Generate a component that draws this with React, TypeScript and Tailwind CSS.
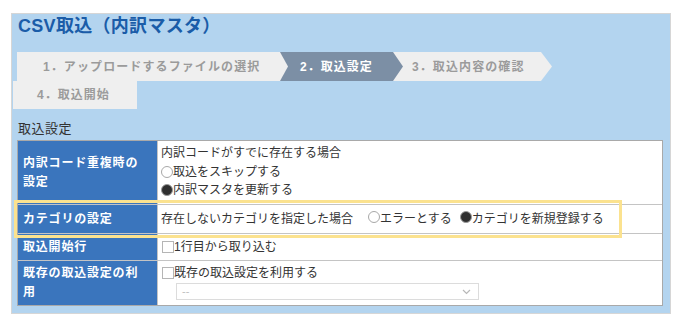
import React from "react";

function Radio({ checked }: { checked?: boolean }) {
  return checked ? (
    <span className="inline-block w-[12px] h-[12px] rounded-full bg-[#2f2f2f] border border-[#9a9a9a] shrink-0" />
  ) : (
    <span className="inline-block w-[12px] h-[12px] rounded-full bg-white border border-[#a8a8a8] shrink-0" />
  );
}

function Check() {
  return <span className="inline-block w-[12px] h-[12px] bg-white border border-[#b5b5b5] shrink-0" />;
}

export default function App() {
  return (
    <div className="w-[677px] h-[321px] bg-white font-['Liberation_Sans','Noto_Sans_CJK_JP',sans-serif] text-[#333]">
      <div className="pt-[13px] pl-[11px]">
        <div className="w-[660px] h-[301px] bg-[#b3d4ef] border border-[#d6d6d6]">
          {/* title */}
          <div className="pl-[6px] h-[24px] leading-[24px] text-[18px] font-bold text-[#1a5ca8] tracking-[0.3px]">
            CSV取込（内訳マスタ）
          </div>

          {/* steps */}
          <div className="mt-[14px] ml-[5px] flex h-[29px]">
            <div className="relative z-30 w-[271px] h-full bg-[#efefef] [clip-path:polygon(0_0,263px_0,271px_50%,263px_100%,0_100%)] flex items-center pl-[26px] text-[12px] font-bold text-[#9b9b9b] tracking-[1.1px]">
              1．アップロードするファイルの選択
            </div>
            <div className="relative z-20 -ml-[10px] w-[125px] h-full bg-[#7c8fa5] [clip-path:polygon(0_0,115px_0,125px_50%,115px_100%,0_100%)] flex items-center pl-[22px] text-[12px] font-bold text-white tracking-[1px]">
              2．取込設定
            </div>
            <div className="relative z-10 -ml-[10px] w-[159px] h-full bg-[#efefef] [clip-path:polygon(0_0,148px_0,159px_50%,148px_100%,0_100%)] flex items-center pl-[19px] text-[12px] font-bold text-[#9b9b9b] tracking-[1.1px]">
              3．取込内容の確認
            </div>
          </div>
          <div className="ml-[1px] flex h-[28px]">
            <div className="w-[124px] h-full bg-[#efefef] flex items-center pl-[24px] text-[12px] font-bold text-[#9b9b9b] tracking-[1px]">
              4．取込開始
            </div>
          </div>

          {/* section title */}
          <div className="mt-[10px] pl-[6px] h-[21px] leading-[20px] text-[13px] tracking-[0.5px] text-[#333]">
            取込設定
          </div>

          {/* table */}
          <div className="relative ml-[5px] w-[646px] border border-[#a9a9a9] bg-white text-[12px]">
            {/* row 1 */}
            <div className="flex h-[64px] border-b border-[#c4c4c4]">
              <div className="w-[140px] bg-[#3a75bd] border-r border-[#c4c4c4] flex items-center pl-[5px] text-white font-bold tracking-[0.8px] leading-[19px]">
                <div>
                  内訳コード重複時の
                  <br />
                  設定
                </div>
              </div>
              <div className="flex-1 pl-[3px] pt-[3px] leading-[18.5px]">
                <div>内訳コードがすでに存在する場合</div>
                <div className="flex items-center">
                  <Radio />
                  <span>取込をスキップする</span>
                </div>
                <div className="flex items-center">
                  <Radio checked />
                  <span>内訳マスタを更新する</span>
                </div>
              </div>
            </div>
            {/* row 2 */}
            <div className="flex h-[29px] border-b border-[#c4c4c4]">
              <div className="w-[140px] bg-[#3a75bd] border-r border-[#c4c4c4] flex items-center pl-[5px] text-white font-bold tracking-[0.8px]">
                カテゴリの設定
              </div>
              <div className="flex-1 pl-[3px] flex items-center">
                <span>存在しないカテゴリを指定した場合</span>
                <span className="ml-[15px]"><Radio /></span>
                <span>エラーとする</span>
                <span className="ml-[8px]"><Radio checked /></span>
                <span>カテゴリを新規登録する</span>
              </div>
            </div>
            {/* row 3 */}
            <div className="flex h-[27px] border-b border-[#c4c4c4]">
              <div className="w-[140px] bg-[#3a75bd] border-r border-[#c4c4c4] flex items-center pl-[5px] text-white font-bold tracking-[0.8px]">
                取込開始行
              </div>
              <div className="flex-1 pl-[4px] flex items-center">
                <Check />
                <span>1行目から取り込む</span>
              </div>
            </div>
            {/* row 4 */}
            <div className="flex h-[44px]">
              <div className="w-[140px] bg-[#3a75bd] border-r border-[#c4c4c4] flex items-center pl-[5px] text-white font-bold tracking-[0.8px] leading-[19px]">
                <div>
                  既存の取込設定の利
                  <br />
                  用
                </div>
              </div>
              <div className="flex-1 pl-[4px] pt-[3px]">
                <div className="flex items-center h-[18px]">
                  <Check />
                  <span>既存の取込設定を利用する</span>
                </div>
                <div className="mt-[1px] ml-[14px] w-[303px] h-[17px] border border-[#dcdcdc] flex items-center justify-between pl-[5px] pr-[7px] text-[#c0c0c0] text-[11px]">
                  <span>--</span>
                  <svg width="9" height="6" viewBox="0 0 9 6">
                    <polyline points="1,1 4.5,4.5 8,1" fill="none" stroke="#b8b8b8" strokeWidth="1.2" />
                  </svg>
                </div>
              </div>
            </div>

            {/* highlight */}
            <div className="absolute left-[-4px] top-[59px] w-[608px] h-[38px] border-[3px] border-[#fbe28f] pointer-events-none" />
          </div>
        </div>
      </div>
    </div>
  );
}
